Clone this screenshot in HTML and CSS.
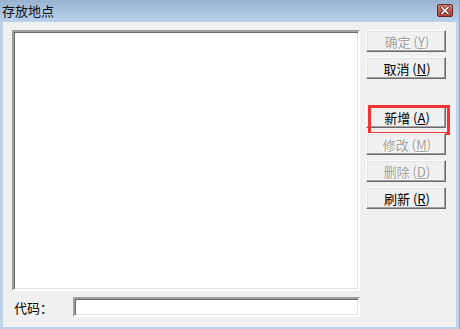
FILE: index.html
```html
<!DOCTYPE html>
<html lang="zh-CN">
<head>
<meta charset="utf-8">
<title>存放地点</title>
<link rel="stylesheet" href="styles.css">
</head>
<body>
<div class="window">
  <div class="titlebar">
    <span class="title">存放地点</span>
    <span class="close">
      <svg width="16" height="13" viewBox="0 0 16 13">
        <defs>
          <linearGradient id="cg" x1="0" y1="0" x2="0" y2="1">
            <stop offset="0" stop-color="#e08a80"/>
            <stop offset="0.5" stop-color="#c75448"/>
            <stop offset="1" stop-color="#b8433a"/>
          </linearGradient>
        </defs>
        <rect x="0.5" y="0.5" width="15" height="12" rx="1.5" fill="url(#cg)" stroke="#5a2a2a"/>
        <path d="M5 3.5 L11 9.5 M11 3.5 L5 9.5" stroke="#4a2020" stroke-width="3" stroke-linecap="square"/>
        <path d="M5 3.5 L11 9.5 M11 3.5 L5 9.5" stroke="#ffffff" stroke-width="1.6" stroke-linecap="square"/>
      </svg>
    </span>
  </div>
  <div class="client">
    <div class="left">
      <div class="listbox"></div>
      <div class="coderow">
        <span class="label">代码：</span>
        <div class="input"></div>
      </div>
    </div>
    <div class="buttons">
      <div class="btn disabled">确定 (<u>Y</u>)</div>
      <div class="btn">取消 (<u>N</u>)</div>
      <div class="btn highlighted spaced">新增 (<u>A</u>)<span class="mark"></span></div>
      <div class="btn disabled">修改 (<u>M</u>)</div>
      <div class="btn disabled">删除 (<u>D</u>)</div>
      <div class="btn">刷新 (<u>R</u>)</div>
    </div>
  </div>
</div>
</body>
</html>
```

FILE: styles.css
```css
html, body {
  margin: 0;
  padding: 0;
}
body {
  width: 460px;
  height: 329px;
  overflow: hidden;
  font-family: "Noto Sans CJK SC", "Liberation Sans", sans-serif;
  font-size: 12px;
  color: #000;
}
.window {
  width: 460px;
  height: 329px;
  box-sizing: border-box;
  display: flex;
  flex-direction: column;
  background: #bcd3ea;
  border-right: 1px solid #8aa6c4;
  padding: 0 3px 2px 3px;
}
.titlebar {
  height: 22px;
  margin: 0 -3px;
  padding: 0 6px 0 2px;
  display: flex;
  align-items: center;
  justify-content: space-between;
  background: linear-gradient(to bottom, #98b3d1 0%, #a9c3df 50%, #b9d1ea 100%);
}
.title {
  font-size: 13px;
  color: #111;
  line-height: 22px;
}
.close {
  display: flex;
  margin-top: -1px;
}
.client {
  flex: 1;
  background: #f0f0f0;
  display: flex;
  padding: 8px 0 0 9px;
  gap: 6px;
}
.left {
  width: 348px;
  display: flex;
  flex-direction: column;
}
.listbox {
  height: 257px;
  background: #fff;
  border: 2px solid;
  border-color: #a0a0a0 #fff #fff #a0a0a0;
  box-shadow: inset 1px 1px #696969, inset -1px -1px #e3e3e3;
}
.coderow {
  display: flex;
  align-items: center;
  margin-top: 6px;
  height: 20px;
}
.label {
  width: 59px;
  padding-left: 2px;
  font-size: 13px;
}
.input {
  flex: 1;
  height: 16px;
  background: #fff;
  border: 2px solid;
  border-color: #a0a0a0 #fff #fff #a0a0a0;
  box-shadow: inset 1px 1px #696969, inset -1px -1px #e3e3e3;
}
.buttons {
  width: 80px;
  display: flex;
  flex-direction: column;
  gap: 5px;
}
.btn {
  position: relative;
  height: 22px;
  box-sizing: border-box;
  display: flex;
  align-items: center;
  justify-content: center;
  background: #f0f0f0;
  border: 1px solid;
  border-color: #fff #696969 #696969 #fff;
  box-shadow: inset -1px -1px #a0a0a0, inset 1px 1px #e3e3e3;
  line-height: 1;
  white-space: pre;
  font-size: 13px;
  padding-left: 2px;
}
.btn u {
  text-decoration: underline;
  text-underline-offset: 1px;
}
.btn.disabled {
  color: #a0a0a0;
  text-shadow: 1px 1px #fff;
}
.btn.spaced {
  margin-top: 22px;
}
.mark {
  position: absolute;
  left: 1px;
  top: -2px;
  width: 82px;
  height: 30px;
  box-sizing: border-box;
  border: 3px solid #ee3434;
}
```
